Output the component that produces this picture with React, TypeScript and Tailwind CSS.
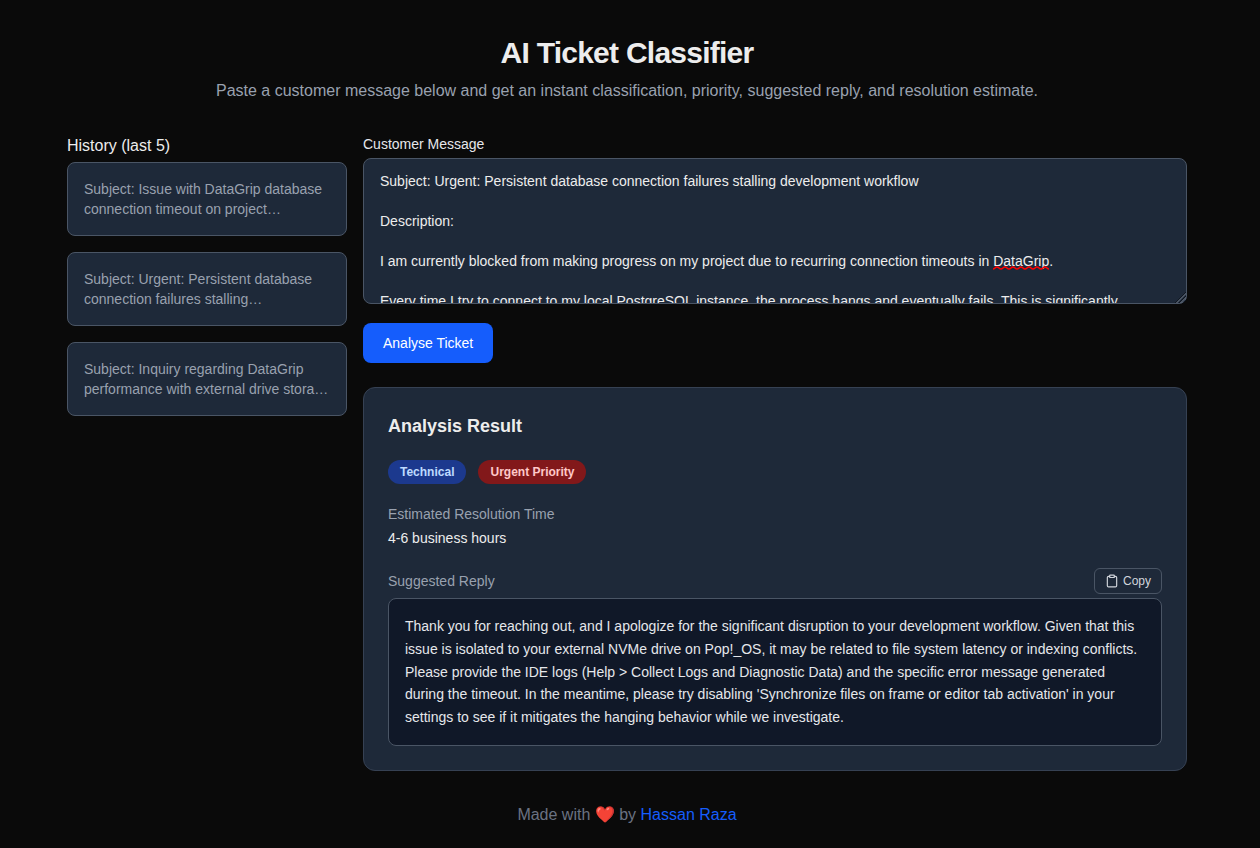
import { useState } from "react";
import type { ReactNode } from "react";
import { FiClipboard } from "react-icons/fi";

const history = [
  "Subject: Issue with DataGrip database connection timeout on project…",
  "Subject: Urgent: Persistent database connection failures stalling…",
  "Subject: Inquiry regarding DataGrip performance with external drive stora…",
];

const initialMessage = `Subject: Urgent: Persistent database connection failures stalling development workflow

Description:

I am currently blocked from making progress on my project due to recurring connection timeouts in DataGrip.

Every time I try to connect to my local PostgreSQL instance, the process hangs and eventually fails. This is significantly`;

const reply =
  "Thank you for reaching out, and I apologize for the significant disruption to your development workflow. Given that this issue is isolated to your external NVMe drive on Pop!_OS, it may be related to file system latency or indexing conflicts. Please provide the IDE logs (Help > Collect Logs and Diagnostic Data) and the specific error message generated during the timeout. In the meantime, please try disabling 'Synchronize files on frame or editor tab activation' in your settings to see if it mitigates the hanging behavior while we investigate.";

function Squiggle() {
  return (
    <svg className="pointer-events-none absolute top-[108px] left-[630px] h-[4px] w-[56px]" viewBox="0 0 56 4" aria-hidden="true">
      <path
        d="M0 3Q1 3 2 2T4 1T6 2T8 3T10 2T12 1T14 2T16 3T18 2T20 1T22 2T24 3T26 2T28 1T30 2T32 3T34 2T36 1T38 2T40 3T42 2T44 1T46 2T48 3T50 2T52 1T54 2T56 3"
        fill="none"
        stroke="#ff0000"
        strokeWidth="1.6"
      />
    </svg>
  );
}

function ResizeGrip() {
  return (
    <svg className="pointer-events-none absolute right-px bottom-px size-[11px]" viewBox="0 0 11 11" fill="none" strokeWidth="1" aria-hidden="true">
      <path d="M0 11L11 0M4 11L11 4M8 11L11 8" stroke="#0f1620" />
      <path d="M1 11.500L11.500 1M5 11.500L11.500 5" stroke="#77808d" />
    </svg>
  );
}

function Badge({ className, children }: { className: string; children: ReactNode }) {
  return <span className={`rounded-full px-3 py-1 text-xs font-semibold ${className}`}>{children}</span>;
}

export default function App() {
  const [message, setMessage] = useState(initialMessage);

  return (
    <div className="min-h-screen bg-[#0a0a0a] pr-1.5 font-['Liberation_Sans',Arial,sans-serif] text-[#ededed]">
      <div className="mx-auto max-w-6xl px-4 pt-[35px] pb-5">
        <header className="mb-[31px] text-center">
          <h1 className="text-3xl font-bold tracking-tight">AI Ticket Classifier</h1>
          <p className="mt-2 text-gray-400">
            Paste a customer message below and get an instant classification, priority, suggested reply, and resolution estimate.
          </p>
        </header>

        <div className="flex flex-col gap-4 md:flex-row">
          <aside className="shrink-0 md:w-[280px]">
            <h2 className="mb-1">History (last 5)</h2>
            <ul className="flex flex-col gap-4">
              {history.map((item) => (
                <li key={item}>
                  <button
                    type="button"
                    className="w-full rounded-lg border border-gray-600 bg-gray-800 p-4 text-left text-sm text-gray-400"
                  >
                    {item}
                  </button>
                </li>
              ))}
            </ul>
          </aside>

          <main className="min-w-0 flex-1">
            <form onSubmit={(e) => e.preventDefault()}>
              <label htmlFor="message" className="mb-1 block text-sm text-gray-200">
                Customer Message
              </label>
              <div className="relative">
                <textarea
                  id="message"
                  rows={6}
                  spellCheck={false}
                  value={message}
                  onChange={(e) => setMessage(e.target.value)}
                  className="block w-full resize-none overflow-hidden rounded-lg border border-gray-600 bg-gray-800 px-4 py-3 text-sm outline-none scheme-dark"
                />
                {message === initialMessage && <Squiggle />}
                <ResizeGrip />
              </div>
              <button type="submit" className="mt-[19px] rounded-lg bg-blue-600 px-5 py-2.5 text-sm text-white">
                Analyse Ticket
              </button>
            </form>

            <section className="mt-6 rounded-xl border border-gray-700 bg-gray-800 p-6">
              <h2 className="text-lg font-semibold">Analysis Result</h2>
              <div className="mt-5 flex flex-wrap gap-3">
                <Badge className="bg-blue-900 text-blue-200">Technical</Badge>
                <Badge className="bg-red-900 text-red-200">Urgent Priority</Badge>
              </div>
              <div className="mt-5 text-sm">
                <h3 className="text-gray-400">Estimated Resolution Time</h3>
                <p className="mt-1">4-6 business hours</p>
              </div>
              <div className="mt-5">
                <div className="mb-1 flex items-center justify-between">
                  <h3 className="text-sm text-gray-400">Suggested Reply</h3>
                  <button type="button" className="flex items-center gap-1 rounded-md border border-gray-600 px-2.5 py-1 text-xs text-gray-300">
                    <FiClipboard className="size-3.5" aria-hidden="true" />
                    Copy
                  </button>
                </div>
                <p className="rounded-lg border border-gray-600 bg-gray-900 p-4 text-sm leading-relaxed text-gray-200">{reply}</p>
              </div>
            </section>
          </main>
        </div>

        <footer className="mt-8 text-center text-gray-500">
          Made with ❤️ by{" "}
          <a href="#author" className="text-blue-600">
            Hassan Raza
          </a>
        </footer>
      </div>
    </div>
  );
}
